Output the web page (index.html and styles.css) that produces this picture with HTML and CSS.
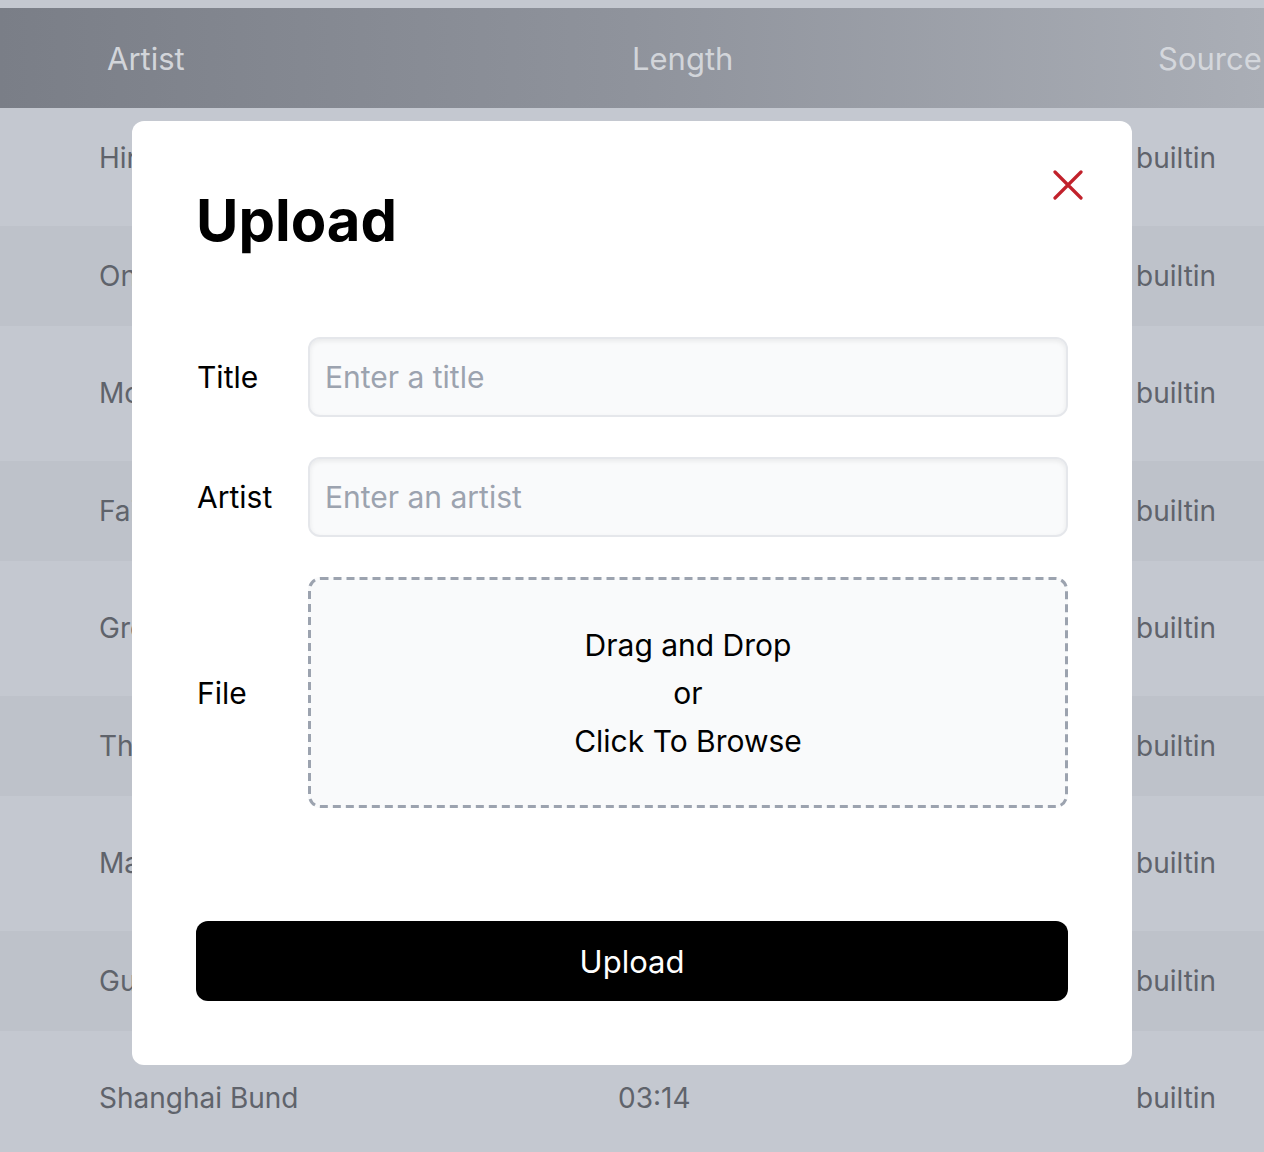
FILE: index.html
```html
<!DOCTYPE html>
<html lang="en">
<head>
<meta charset="utf-8">
<title>Upload</title>
<link rel="stylesheet" href="styles.css">
</head>
<body>
<div class="page">
  <div class="table">
    <div class="thead">
      <span class="th th-artist">Artist</span>
      <span class="th th-length">Length</span>
      <span class="th th-source">Source</span>
    </div>
    <div class="tbody">
      <div class="tr"><span class="td">Hiroshima Rain</span><span class="td">04:12</span><span class="td">builtin</span></div>
      <div class="tr even"><span class="td">One Summer</span><span class="td">03:48</span><span class="td">builtin</span></div>
      <div class="tr"><span class="td">Moonlight</span><span class="td">05:02</span><span class="td">builtin</span></div>
      <div class="tr even"><span class="td">Fairy Tale</span><span class="td">03:21</span><span class="td">builtin</span></div>
      <div class="tr"><span class="td">Green Hills</span><span class="td">04:37</span><span class="td">builtin</span></div>
      <div class="tr even"><span class="td">The River</span><span class="td">03:55</span><span class="td">builtin</span></div>
      <div class="tr"><span class="td">Mayday</span><span class="td">04:05</span><span class="td">builtin</span></div>
      <div class="tr even"><span class="td">Guitar Song</span><span class="td">02:58</span><span class="td">builtin</span></div>
      <div class="tr"><span class="td">Shanghai Bund</span><span class="td">03:14</span><span class="td">builtin</span></div>
    </div>
  </div>
</div>

<div class="overlay">
  <div class="modal">
    <button class="close" aria-label="Close">
      <svg width="30" height="30" viewBox="0 0 30 30" fill="none">
        <path d="M2 2 L28 28 M28 2 L2 28" stroke="#c1212b" stroke-width="3.2" stroke-linecap="round"/>
      </svg>
    </button>
    <h1 class="modal-title">Upload</h1>
    <div class="form">
      <label class="label">Title</label>
      <input class="input" type="text" placeholder="Enter a title">
      <label class="label">Artist</label>
      <input class="input" type="text" placeholder="Enter an artist">
      <label class="label">File</label>
      <div class="dropzone">
        <svg class="dash" width="760" height="231" viewBox="0 0 760 231" fill="none" aria-hidden="true">
          <rect x="1.5" y="1.5" width="757" height="228" rx="11" stroke="#9ca3af" stroke-width="3" stroke-dasharray="8 5"/>
        </svg>
        <span>Drag and Drop</span>
        <span>or</span>
        <span>Click To Browse</span>
      </div>
    </div>
    <button class="submit">Upload</button>
  </div>
</div>
</body>
</html>
```

FILE: styles.css
```css
* { box-sizing: border-box; }

html, body {
  margin: 0;
  padding: 0;
  background: #c4c8d0;
  font-family: Inter, "Noto Sans", sans-serif;
  overflow: hidden;
}

.page {
  padding-top: 8px;
  width: 1264px;
  height: 1152px;
}

.thead {
  height: 100px;
  display: grid;
  grid-template-columns: 525px 526px 1fr;
  align-items: center;
  padding-left: 107px;
  background: linear-gradient(90deg, #7a7e87 0%, #8f939c 50%, #aaaeb6 100%);
  white-space: nowrap;
  overflow: hidden;
}

.th {
  font-size: 31px;
  color: #d2d5da;
}

.th-source { color: #d4d7dc; }

.tbody {
  display: flex;
  flex-direction: column;
  gap: 17.5px;
}

.tr {
  height: 100px;
  display: grid;
  grid-template-columns: 519px 518px 1fr;
  align-items: center;
  padding-left: 99px;
}

.tr.even { background: #bec2ca; }

.td {
  font-size: 28px;
  color: #5f636b;
  white-space: nowrap;
}

.overlay {
  position: fixed;
  inset: 0;
  display: flex;
  justify-content: center;
  align-items: flex-start;
  padding-top: 121px;
}

.modal {
  position: relative;
  width: 1000px;
  background: #fff;
  border-radius: 12px;
  padding: 64px;
}

.close {
  position: absolute;
  top: 49px;
  right: 49px;
  width: 30px;
  height: 30px;
  padding: 0;
  border: 0;
  background: none;
  display: block;
}

.close svg { display: block; }

.modal-title {
  margin: 0 0 82px;
  font-size: 58px;
  font-weight: 700;
  line-height: 70px;
  color: #000;
}

.form {
  display: grid;
  grid-template-columns: 112px 760px;
  row-gap: 40px;
  align-items: center;
}

.label {
  font-size: 30px;
  color: #000;
  padding-left: 1px;
}

.input {
  height: 80px;
  width: 100%;
  border: 2px solid #e5e7eb;
  border-radius: 12px;
  background: #f9fafb;
  box-shadow: inset 0 2px 5px rgba(0, 0, 0, 0.07);
  padding: 0 15px;
  font-family: inherit;
  font-size: 30px;
  color: #111;
  outline: none;
}

.input::placeholder { color: #9ca3af; }

.dropzone {
  position: relative;
  height: 231px;
  border-radius: 12px;
  background: #f9fafb;
  display: flex;
  flex-direction: column;
  align-items: center;
  justify-content: center;
  font-size: 30px;
  line-height: 48px;
  color: #000;
}

.dash {
  position: absolute;
  top: 0;
  left: 0;
  pointer-events: none;
}

.submit {
  display: block;
  margin-top: 113px;
  width: 100%;
  height: 80px;
  border: 0;
  border-radius: 12px;
  background: #000;
  color: #fff;
  font-family: inherit;
  font-size: 31px;
}
```
